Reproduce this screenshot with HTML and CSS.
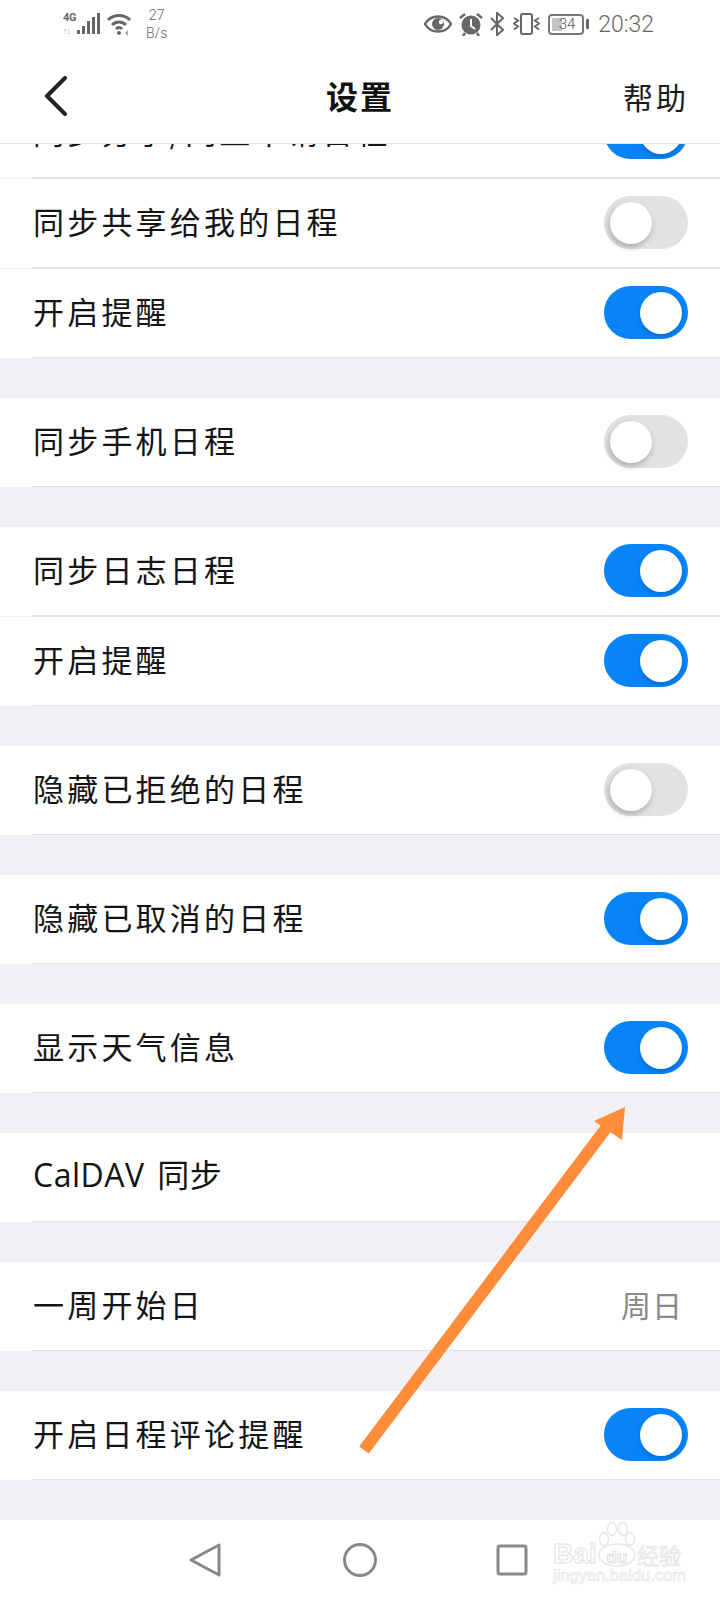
FILE: index.html
```html
<!DOCTYPE html>
<html lang="zh-CN">
<head>
    <meta charset="UTF-8">
    <meta name="viewport" content="width=device-width, initial-scale=1.0">
    <title>设置</title>
    <link rel="stylesheet" href="styles.css">
</head>
<body>
    <div class="phone">
        <div class="status-bar">
            <div class="status-left">
                <div class="net-type">
                    <span class="net-label">4G</span>
                    <span class="net-arrows">↑↓</span>
                </div>
                <svg class="signal" width="24" height="24" viewBox="0 0 24 24">
                    <rect x="0" y="18" width="3" height="4" fill="#666"/>
                    <rect x="5" y="14" width="3" height="8" fill="#666"/>
                    <rect x="10" y="9" width="3" height="13" fill="#666"/>
                    <rect x="15" y="5" width="3" height="17" fill="#666"/>
                    <rect x="20" y="1" width="3" height="21" fill="#666"/>
                </svg>
                <svg class="wifi" width="26" height="24" viewBox="0 0 26 24" fill="none" stroke="#666" stroke-width="3">
                    <path d="M1 8c6-6 16-6 22 0"/>
                    <path d="M5 13c4-4 10-4 14 0"/>
                    <path d="M9 17c2-2 4-2 6 0"/>
                    <circle cx="12" cy="21" r="2" fill="#666" stroke="none"/>
                    <path d="M18 21l3-3v6z" fill="#aaa" stroke="none"/>
                </svg>
                <div class="net-speed">
                    <span>27</span>
                    <span>B/s</span>
                </div>
            </div>
            <div class="status-right">
                <svg width="28" height="18" viewBox="0 0 28 18">
                    <path d="M1 9c6-10 20-10 26 0c-6 10-20 10-26 0z" fill="none" stroke="#666" stroke-width="2.4"/>
                    <circle cx="14" cy="9" r="6" fill="#666"/>
                    <circle cx="17" cy="7" r="2.2" fill="#fff"/>
                </svg>
                <svg width="24" height="24" viewBox="0 0 24 24">
                    <circle cx="12" cy="13" r="9.5" fill="#666"/>
                    <path d="M12 7v7l4 3" fill="none" stroke="#fff" stroke-width="2"/>
                    <path d="M1 6l5-4M23 6l-5-4M6 21l-2 3M18 21l2 3" stroke="#666" stroke-width="2.4" fill="none"/>
                </svg>
                <svg width="15" height="24" viewBox="0 0 15 24" fill="none" stroke="#666" stroke-width="2">
                    <path d="M1 6l12 12l-6 5V1l6 5L1 18"/>
                </svg>
                <svg class="vibrate" width="27" height="24" viewBox="0 0 27 24" fill="none" stroke="#666" stroke-width="2">
                    <rect x="8" y="2" width="11" height="20" rx="2"/>
                    <path d="M1 6l4 2.5l-4 3l4 3l-4 3M26 6l-4 2.5l4 3l-4 3l4 3"/>
                </svg>
                <div class="battery">
                    <div class="battery-box"><span class="battery-level"></span><span class="battery-num">34</span></div>
                    <span class="battery-nub"></span>
                </div>
                <span class="clock">20:32</span>
            </div>
        </div>

        <header class="top-bar">
            <svg class="back" width="24" height="40" viewBox="0 0 24 40" fill="none" stroke="#222" stroke-width="4" stroke-linecap="round" stroke-linejoin="round">
                <path d="M21 2L3 20l18 18"/>
            </svg>
            <h1 class="title">设置</h1>
            <span class="help">帮助</span>
        </header>

        <main class="list">
            <section class="group group-cut">
                <div class="row linked"><div class="row-body"><span class="label">同步分享/网上申请日程</span><span class="toggle on"></span></div></div>
                <div class="row linked"><div class="row-body"><span class="label">同步共享给我的日程</span><span class="toggle"></span></div></div>
                <div class="row"><div class="row-body"><span class="label">开启提醒</span><span class="toggle on"></span></div></div>
            </section>
            <section class="group">
                <div class="row"><div class="row-body"><span class="label">同步手机日程</span><span class="toggle"></span></div></div>
            </section>
            <section class="group">
                <div class="row linked"><div class="row-body"><span class="label">同步日志日程</span><span class="toggle on"></span></div></div>
                <div class="row"><div class="row-body"><span class="label">开启提醒</span><span class="toggle on"></span></div></div>
            </section>
            <section class="group">
                <div class="row"><div class="row-body"><span class="label">隐藏已拒绝的日程</span><span class="toggle"></span></div></div>
            </section>
            <section class="group">
                <div class="row"><div class="row-body"><span class="label">隐藏已取消的日程</span><span class="toggle on"></span></div></div>
            </section>
            <section class="group">
                <div class="row"><div class="row-body"><span class="label">显示天气信息</span><span class="toggle on"></span></div></div>
            </section>
            <section class="group">
                <div class="row"><div class="row-body"><span class="label caldav">CalDAV 同步</span></div></div>
            </section>
            <section class="group">
                <div class="row"><div class="row-body"><span class="label">一周开始日</span><span class="row-value">周日</span></div></div>
            </section>
            <section class="group">
                <div class="row"><div class="row-body"><span class="label">开启日程评论提醒</span><span class="toggle on"></span></div></div>
            </section>
        </main>

        <nav class="nav-bar">
            <svg width="34" height="36" viewBox="0 0 34 36" fill="none" stroke="#888" stroke-width="3" stroke-linejoin="round">
                <path d="M32 3v30L4 18z"/>
            </svg>
            <svg class="nav-home" width="34" height="36" viewBox="0 0 34 36" fill="none" stroke="#888" stroke-width="3">
                <circle cx="17" cy="18" r="15.5"/>
            </svg>
            <svg width="34" height="36" viewBox="0 0 34 36" fill="none" stroke="#888" stroke-width="3" stroke-linejoin="round">
                <rect x="3" y="4" width="28" height="28" rx="2"/>
            </svg>
        </nav>

        <!-- orange arrow drawn on top of the screenshot -->
        <svg class="arrow" width="720" height="1600" viewBox="0 0 720 1600">
            <path d="M364 1450L610 1123" stroke="#ff8c3a" stroke-width="12" fill="none"/>
            <path d="M625 1107L594 1121L622 1140z" fill="#ff8c3a"/>
        </svg>

        <div class="watermark">
            <svg class="paw" width="40" height="46" viewBox="0 0 40 46" fill="#fff" stroke="#e6e6e6" stroke-width="1.4">
                <ellipse cx="7" cy="17" rx="4.5" ry="6.5"/>
                <ellipse cx="15" cy="7" rx="4.5" ry="6.5"/>
                <ellipse cx="26" cy="7" rx="4.5" ry="6.5"/>
                <ellipse cx="33" cy="17" rx="4.5" ry="6.5"/>
                <ellipse cx="20" cy="33" rx="18" ry="11"/>
            </svg>
            <div class="mark-line">
                <span class="mark-bai">Bai</span><span class="mark-du">du</span><span class="mark-cn">经验</span>
            </div>
            <div class="mark-url">jingyan.baidu.com</div>
        </div>
    </div>
</body>
</html>
```

FILE: styles.css
```css
* {
    box-sizing: border-box;
}
body {
    margin: 0;
    background-color: #fff;
    font-family: "Noto Sans CJK SC", "Noto Sans", sans-serif;
    color: #141414;
}
.phone {
    position: relative;
    width: 720px;
    height: 1600px;
    display: flex;
    flex-direction: column;
    overflow: hidden;
    background-color: #f0f0f5;
}

/* status bar */
.status-bar {
    height: 48px;
    flex: none;
    display: flex;
    justify-content: space-between;
    align-items: center;
    padding: 0 66px 0 63px;
    background-color: #fff;
    color: #666;
    font-family: Roboto, sans-serif;
}
.status-left,
.status-right {
    display: flex;
    align-items: center;
}
.net-type {
    width: 14px;
    display: flex;
    flex-direction: column;
    font-weight: 700;
    line-height: 10px;
}
.net-label {
    font-size: 11px;
    letter-spacing: -0.3px;
}
.net-arrows {
    margin-top: 3px;
    font-size: 9px;
    letter-spacing: -1px;
    color: #aaa;
}
.wifi {
    margin-left: 6px;
}
.net-speed {
    display: flex;
    flex-direction: column;
    align-items: center;
    margin-left: 13px;
    font-size: 14px;
    font-weight: 300;
    line-height: 18px;
}
.status-right {
    gap: 7px;
}
.vibrate,
.battery {
    margin-left: 1px;
}
.battery {
    display: flex;
    align-items: center;
    gap: 2px;
}
.battery-box {
    position: relative;
    width: 36px;
    height: 21px;
    border: 2px solid #777;
    border-radius: 4px;
    display: flex;
    align-items: center;
    justify-content: center;
    font-size: 15px;
    font-weight: 300;
    color: #555;
}
.battery-level {
    position: absolute;
    left: 2px;
    top: 2px;
    bottom: 2px;
    width: 10px;
    background-color: #c4c4c4;
}
.battery-num {
    position: relative;
    padding-left: 2px;
}
.battery-nub {
    width: 3px;
    height: 10px;
    border-radius: 1px;
    background-color: #666;
}
.clock {
    margin-left: 2px;
    font-size: 23px;
    font-weight: 300;
}

/* title bar */
.top-bar {
    height: 96px;
    flex: none;
    display: grid;
    grid-template-columns: 1fr auto 1fr;
    align-items: center;
    padding: 0 31px;
    background-color: #fff;
    border-bottom: 1px solid #dfdfe1;
}
.back {
    margin-left: 13px;
}
.title {
    margin: 0;
    font-size: 32px;
    font-weight: 700;
    line-height: 1.2;
    letter-spacing: 2px;
    color: #111;
}
.help {
    justify-self: end;
    font-size: 30px;
    line-height: 1.2;
    letter-spacing: 3px;
    color: #1a1a1a;
}

/* settings list */
.list {
    flex: 1;
    min-height: 0;
    overflow: hidden;
}
.group {
    margin-bottom: 40px;
}
.group-cut {
    margin-top: -55px;
}
.row {
    padding-left: 32px;
    background-color: #fff;
}
.row-body {
    height: 89px;
    display: flex;
    justify-content: space-between;
    align-items: center;
    padding: 0 32px 2px 0;
    border-bottom: 1px solid #e2e2e5;
}
.row.linked .row-body {
    height: 90px;
    border-bottom: 2px solid #e2e2e5;
}
.row.linked {
    box-shadow: inset 0 -1px 0 #f2f2f3;
}
.label {
    margin: 0 0 2px 1px;
    font-size: 31px;
    line-height: 1.2;
    letter-spacing: 3.2px;
}
.caldav {
    font-family: "Open Sans", "Noto Sans CJK SC", sans-serif;
    font-size: 32px;
    letter-spacing: 0.5px;
    word-spacing: 4px;
}
.row-value {
    margin: 0 5px 2px 0;
    font-size: 30px;
    line-height: 1.2;
    letter-spacing: 1px;
    color: #8a8a8a;
}
.toggle {
    position: relative;
    width: 84px;
    height: 53px;
    border-radius: 27px;
    background-color: #e1e2e4;
}
.toggle::after {
    content: "";
    position: absolute;
    top: 6px;
    left: 6px;
    width: 42px;
    height: 42px;
    border-radius: 50%;
    background-color: #fff;
    box-shadow: -1px 3px 6px rgba(0, 0, 0, 0.25);
}
.toggle.on {
    background-color: #0785f8;
}
.toggle.on::after {
    left: 36px;
    box-shadow: 0 3px 5px rgba(0, 40, 90, 0.25);
}

/* bottom navigation */
.nav-bar {
    height: 80px;
    flex: none;
    display: flex;
    align-items: center;
    gap: 120px;
    padding-left: 187px;
    background-color: #fff;
}
.nav-home {
    margin: 0 -2px 0 2px;
}

/* overlays */
.arrow {
    position: absolute;
    top: 0;
    left: 0;
    pointer-events: none;
}
.watermark {
    position: absolute;
    left: 553px;
    top: 1522px;
    width: 128px;
    height: 62px;
    font-family: "Liberation Sans", sans-serif;
    color: #fff;
    white-space: nowrap;
}
.paw {
    position: absolute;
    left: 44px;
    top: 0;
}
.mark-line {
    position: absolute;
    left: 0;
    top: 19px;
    display: flex;
    align-items: center;
    font-weight: 700;
    line-height: 26px;
}
.mark-bai {
    width: 44px;
    font-size: 28px;
    -webkit-text-stroke: 1px #e2e2e2;
}
.mark-du {
    position: relative;
    top: 4px;
    width: 40px;
    font-size: 17px;
    text-align: center;
    -webkit-text-stroke: 1px #dedede;
}
.mark-cn {
    font-family: "Noto Sans CJK SC", sans-serif;
    font-size: 22px;
    font-weight: 400;
    -webkit-text-stroke: 0.8px #e2e2e2;
}
.mark-url {
    position: absolute;
    left: 0;
    bottom: 0;
    font-size: 16.5px;
    line-height: 18px;
    -webkit-text-stroke: 0.7px #e6e6e6;
}
```
